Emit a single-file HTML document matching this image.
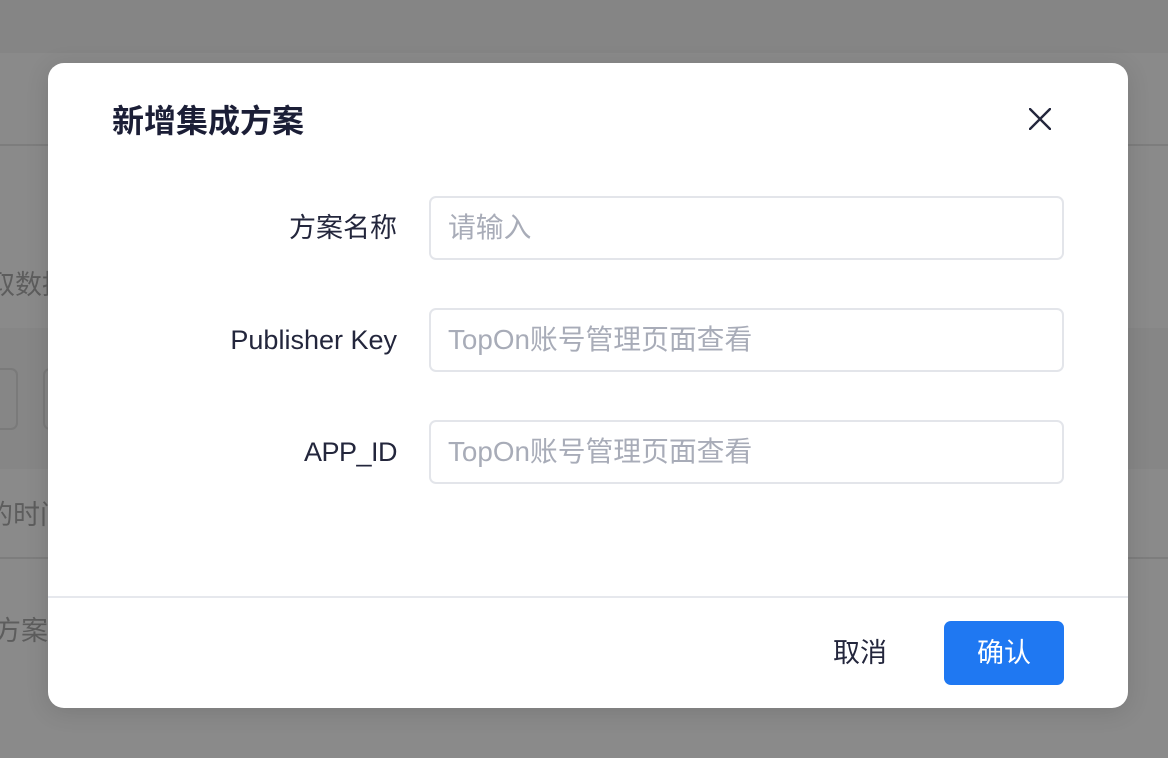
<!DOCTYPE html>
<html><head><meta charset="utf-8"><style>
*{margin:0;padding:0;box-sizing:border-box}
body{width:1168px;height:758px;overflow:hidden;background:#8a8a8a;font-family:"Liberation Sans","Noto Sans CJK SC",sans-serif;position:relative}
.bg{position:absolute;left:0;width:1168px}
.t{position:absolute;color:#3a3a3a;font-size:27px;opacity:.55;line-height:30px}
.modal{position:absolute;left:48px;top:63px;width:1080px;height:645px;background:#fff;border-radius:16px;box-shadow:0 4px 24px rgba(0,0,0,.12)}
.title{position:absolute;left:64px;top:38px;font-size:32px;line-height:40px;font-weight:bold;color:#1b1e36}
.close{position:absolute;left:981px;top:45px}
.lab{position:absolute;right:731px;font-size:27px;line-height:32px;color:#23263c;text-align:right;white-space:nowrap}
.inp{position:absolute;left:381px;width:635px;height:64px;border:2px solid #e3e5ea;border-radius:7px;font-size:27.8px;color:#a8acb8;padding-left:17px;line-height:60px}
.div{position:absolute;left:0;top:533px;width:1080px;height:2px;background:#e6e8ed}
.cancel{position:absolute;left:785px;top:574px;font-size:27px;line-height:32px;color:#23263c}
.ok{position:absolute;left:896px;top:558px;width:120px;height:64px;background:#1f78f2;border-radius:7px;color:#fff;font-size:27px;text-align:center;line-height:64px}
</style></head><body>
<div class="bg" style="top:0;height:53px;background:#858585"></div>
<div class="bg" style="top:144px;height:2px;background:#7d7d7d"></div>
<div class="bg" style="top:328px;height:141px;background:#868686"></div>
<div class="bg" style="top:557px;height:2px;background:#7d7d7d"></div>
<div style="position:absolute;left:-10px;top:368px;width:28px;height:62px;border:2px solid #7a7a7a;border-radius:7px"></div>
<div style="position:absolute;left:43px;top:368px;width:40px;height:62px;border:2px solid #7a7a7a;border-radius:7px"></div>
<div class="t" style="left:-12px;top:270px">取数据</div>
<div class="t" style="left:-14px;top:500px">的时间</div>
<div class="t" style="left:-6px;top:616px">方案名</div>
<div class="modal">
<div class="title">新增集成方案</div>
<svg class="close" width="22" height="22" viewBox="0 0 22 22"><path d="M1 1L21 21M21 1L1 21" stroke="#23263c" stroke-width="2.4" stroke-linecap="round"/></svg>
<div class="lab" style="top:149px">方案名称</div>
<div class="inp" style="top:133px">请输入</div>
<div class="lab" style="top:261px">Publisher Key</div>
<div class="inp" style="top:245px">TopOn账号管理页面查看</div>
<div class="lab" style="top:373px;letter-spacing:-0.5px">APP_ID</div>
<div class="inp" style="top:357px">TopOn账号管理页面查看</div>
<div class="div"></div>
<div class="cancel">取消</div>
<div class="ok">确认</div>
</div>
</body></html>
